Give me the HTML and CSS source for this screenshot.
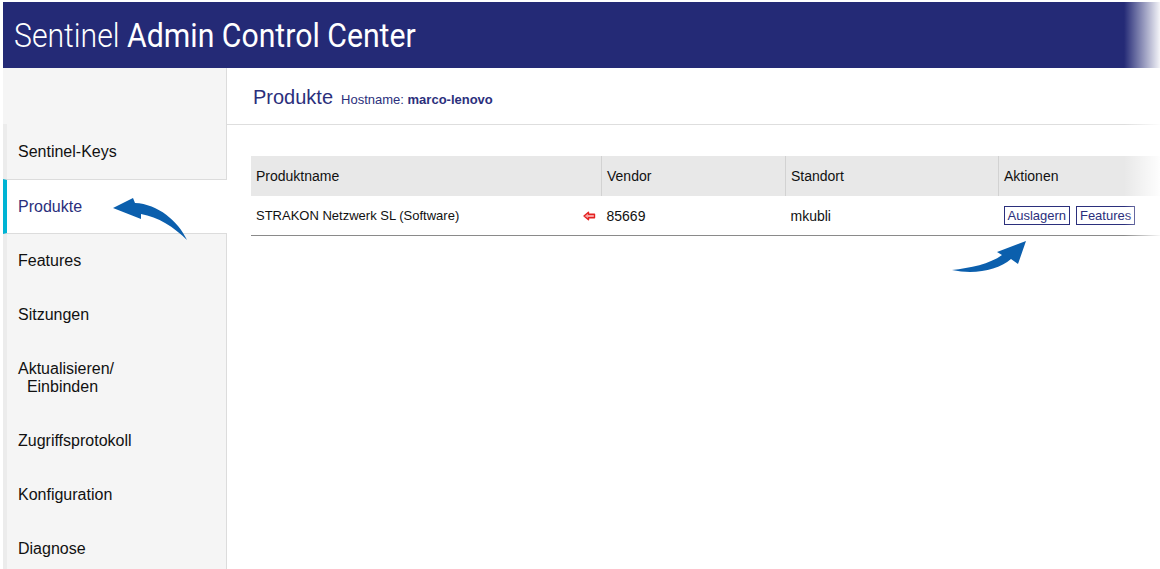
FILE: index.html
```html
<!DOCTYPE html>
<html lang="de">
<head>
    <meta charset="UTF-8">
    <meta name="viewport" content="width=device-width, initial-scale=1.0">
    <title>Sentinel Admin Control Center</title>
    <link rel="stylesheet" href="styles.css">
</head>
<body>
    <div class="page">
        <header class="topbar">
            <h1><span class="brand">Sentinel</span> Admin Control Center</h1>
        </header>

        <div class="layout">
            <nav class="sidebar">
                <div class="sidebar-top"></div>
                <a class="nav-item first" href="#">Sentinel-Keys</a>
                <a class="nav-item active" href="#">Produkte</a>
                <a class="nav-item" href="#">Features</a>
                <a class="nav-item" href="#">Sitzungen</a>
                <a class="nav-item double" href="#">Aktualisieren/<br>&nbsp;&nbsp;Einbinden</a>
                <a class="nav-item" href="#">Zugriffsprotokoll</a>
                <a class="nav-item" href="#">Konfiguration</a>
                <a class="nav-item" href="#">Diagnose</a>
            </nav>

            <main class="content">
                <div class="content-head">
                    <h2>Produkte</h2>
                    <span class="host">Hostname: <b>marco-lenovo</b></span>
                </div>

                <table class="products">
                    <thead>
                        <tr>
                            <th class="col-name">Produktname</th>
                            <th class="col-vendor">Vendor</th>
                            <th class="col-place">Standort</th>
                            <th>Aktionen</th>
                        </tr>
                    </thead>
                    <tbody>
                        <tr>
                            <td>
                                STRAKON Netzwerk SL (Software)
                                <svg class="detach-icon" width="13" height="10" viewBox="0 0 13 10">
                                    <path d="M1,5 L5.5,1.2 L5.5,3.3 L11.5,3.3 L11.5,6.7 L5.5,6.7 L5.5,8.8 Z" fill="#f6a3a3" stroke="#e42222" stroke-width="1.4" stroke-linejoin="round"/>
                                </svg>
                            </td>
                            <td>85669</td>
                            <td>mkubli</td>
                            <td class="actions">
                                <a class="action-btn" href="#">Auslagern</a>
                                <a class="action-btn" href="#">Features</a>
                            </td>
                        </tr>
                    </tbody>
                </table>
            </main>
        </div>

        <!-- annotation arrows -->
        <svg class="note note-left" width="100" height="55" viewBox="0 0 100 55">
            <path d="M13,16 L33,6 L35,11 C58,12 78,29 87,48 C74,35 58,25 41,22 L41,27 Z" fill="#0b5fad"/>
        </svg>
        <svg class="note note-right" width="95" height="45" viewBox="0 0 95 45">
            <path d="M12,37 C30,35 50,31 62,22 L57,19 L86,8 L78,31 L71,26 C58,37 35,42 12,37 Z" fill="#0b5fad"/>
        </svg>

        <div class="edge-fade"></div>
    </div>
</body>
</html>
```

FILE: styles.css
```css
body {
    margin: 2px 0 0 3px;
    padding: 0;
    font-family: "Liberation Sans", Arial, sans-serif;
    background-color: #fff;
    color: #111;
    overflow: hidden;
}
.page {
    position: relative;
    height: 567px;
    overflow: hidden;
}
.topbar {
    height: 66px;
    background-color: #242a76;
    display: flex;
    align-items: center;
    padding-left: 11px;
}
.topbar h1 {
    margin: 0;
    font-family: Roboto, sans-serif;
    font-weight: 400;
    font-size: 33px;
    color: #fff;
    white-space: nowrap;
    transform: scaleX(0.915);
    transform-origin: left center;
}
.topbar .brand {
    font-weight: 300;
}
.layout {
    display: flex;
}
.sidebar {
    width: 223px;
    flex-shrink: 0;
    background-color: #f5f5f5;
    border-right: 1px solid #dcdcdc;
    display: flex;
    flex-direction: column;
    height: 520px;
}
.sidebar-top {
    height: 56px;
    flex-shrink: 0;
}
.nav-item {
    box-sizing: border-box;
    height: 54px;
    flex-shrink: 0;
    display: flex;
    align-items: center;
    padding-left: 11px;
    border-left: 4px solid #ececec;
    color: #111;
    text-decoration: none;
    font-size: 16px;
    line-height: 18px;
}
.nav-item.first {
    height: 55px;
}
.nav-item.double {
    height: 72px;
}
.nav-item.active {
    height: 55px;
    background-color: #fff;
    border-left-color: #00b4d4;
    border-top: 1px solid #dcdcdc;
    border-bottom: 1px solid #dcdcdc;
    color: #2b2f7c;
    margin-right: -1px;
}
.content {
    flex: 1;
}
.content-head {
    height: 57px;
    box-sizing: border-box;
    border-bottom: 1px solid #dedede;
    display: flex;
    align-items: center;
    padding-left: 26px;
    padding-top: 2px;
    gap: 8px;
    color: #2b2f7c;
}
.content-head h2 {
    margin: 0;
    font-size: 20px;
    font-weight: 400;
}
.host {
    font-size: 13px;
    padding-top: 4px;
}
.products {
    margin: 31px 0 0 24px;
    width: calc(100% - 24px);
    border-collapse: collapse;
    font-size: 14px;
}
.products th {
    height: 40px;
    background-color: #e8e8e8;
    font-weight: 400;
    text-align: left;
    padding: 0 5px;
    border-left: 1px solid #d2d2d2;
}
.products th:first-child {
    border-left: none;
}
.products td {
    height: 39px;
    padding: 0 6px 0 5px;
    border-bottom: 1px solid #8a8a8a;
}
.products td:first-child {
    font-size: 13px;
}
.col-name {
    width: 340px;
}
.col-vendor {
    width: 173px;
}
.col-place {
    width: 202px;
}
.detach-icon {
    float: right;
    margin-top: 3px;
}
.actions {
    white-space: nowrap;
}
.action-btn {
    display: inline-block;
    font-size: 13px;
    line-height: 17px;
    padding: 0 3px;
    border: 1px solid #2b2f7c;
    color: #2b2f7c;
    text-decoration: none;
    margin-right: 2px;
}
.note {
    position: absolute;
}
.note-left {
    left: 97px;
    top: 190px;
}
.note-right {
    left: 937px;
    top: 231px;
}
.edge-fade {
    position: absolute;
    top: 0;
    right: 0;
    width: 36px;
    height: 100%;
    background: linear-gradient(to right, rgba(255, 255, 255, 0), rgba(255, 255, 255, 0.95));
}
```
